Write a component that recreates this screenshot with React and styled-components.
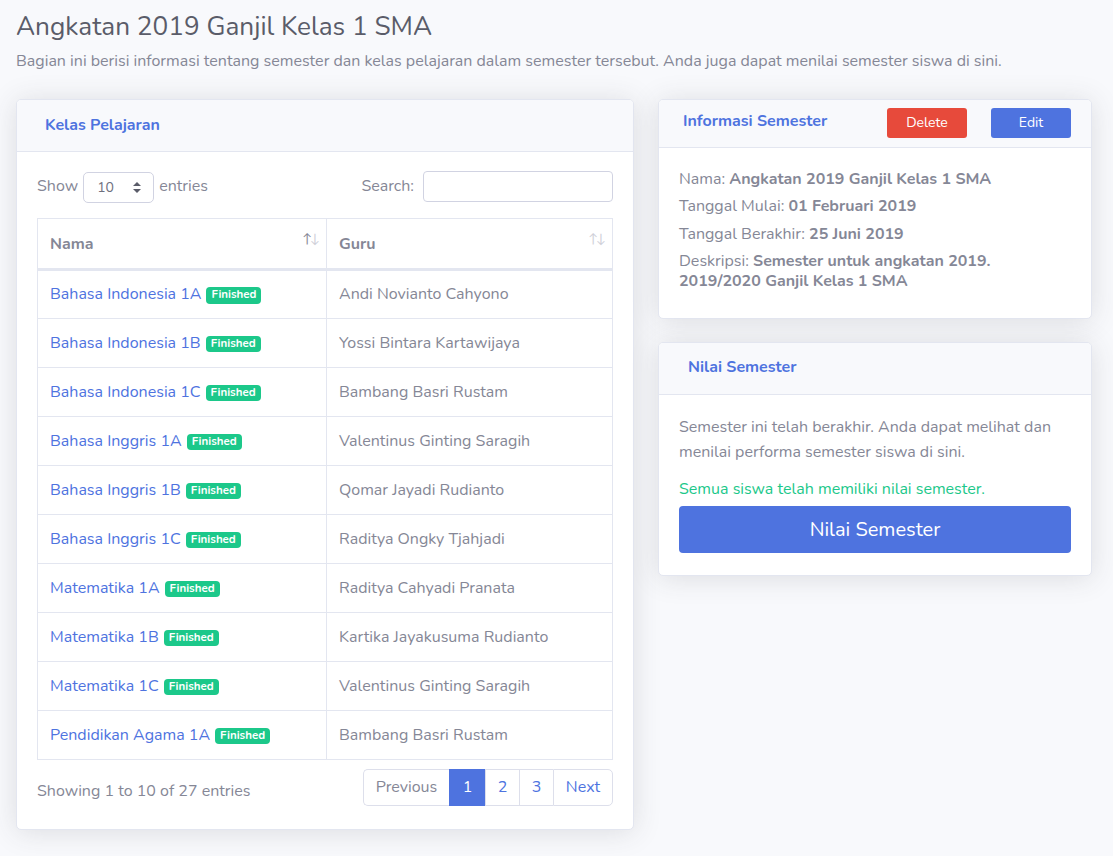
import React from "react";
import styled, { createGlobalStyle } from "styled-components";

const FONT = `Nunito, "Noto Sans", "Open Sans", Lato, sans-serif`;

const Global = createGlobalStyle`
  html, body { margin: 0; padding: 0; background: #f8f9fc; }
  body { font-family: ${FONT}; color: #858796; font-size: 16px; }
  * { box-sizing: border-box; }
`;

const Page = styled.div`
  padding: 11px 21px 24px 16px;
  min-height: 856px;
`;

const Title = styled.h1`
  margin: 0;
  font-size: 26.2px;
  font-weight: 400;
  color: #5a5c69;
  line-height: 1.2;
`;

const Lead = styled.p`
  margin: 10px 0 27px;
  font-size: 16px;
  line-height: 1.2;
  color: #858796;
`;

const Grid = styled.div`
  display: grid;
  grid-template-columns: 618px 434px;
  column-gap: 24px;
  align-items: start;
`;

const Column = styled.div`
  display: flex;
  flex-direction: column;
  gap: 23px;
`;

const Card = styled.div`
  background: #fff;
  border: 1px solid #e3e6f0;
  border-radius: 5px;
  box-shadow: 0 2px 28px 0 rgba(58, 59, 69, 0.15);
  overflow: hidden;
`;

const CardHeader = styled.div`
  background: #f8f9fc;
  border-bottom: 1px solid #e3e6f0;
  height: ${(p) => p.$h}px;
  padding: 0 20px 0 ${(p) => p.$pl}px;
  display: flex;
  align-items: center;
  justify-content: space-between;
`;

const CardTitle = styled.h6`
  margin: 0;
  font-size: 16px;
  font-weight: 700;
  color: #4e73df;
  margin-top: ${(p) => p.$mt || 0}px;
`;

const HeaderButtons = styled.div`
  display: flex;
  gap: 24px;
  align-self: flex-start;
  margin-top: 8px;
`;

const SmallBtn = styled.button`
  width: 80px;
  height: 30px;
  border: none;
  border-radius: 3px;
  font-family: ${FONT};
  font-size: 14px;
  color: #fff;
  background: ${(p) => (p.$variant === "danger" ? "#e74a3b" : "#4e73df")};
`;

const CardBody = styled.div`
  padding: ${(p) => p.$pad};
`;

const Controls = styled.div`
  display: flex;
  justify-content: space-between;
  align-items: center;
  font-size: 16px;
  margin-bottom: 15px;
`;

const Inline = styled.label`
  display: flex;
  align-items: center;
  gap: 5px;
`;

const SelectBox = styled.div`
  width: 71px;
  height: 31px;
  border: 1px solid #d1d3e2;
  border-radius: 5px;
  display: flex;
  align-items: center;
  justify-content: space-between;
  padding: 0 12px 0 13px;
  color: #6e707e;
  font-size: 14px;
  margin-top: 2px;
`;

const SearchInput = styled.input`
  width: 190px;
  height: 31px;
  border: 1px solid #d1d3e2;
  border-radius: 4px;
  margin-left: 4px;
  outline: none;
`;

const Table = styled.table`
  width: 100%;
  border-collapse: collapse;
  border: 1px solid #e3e6f0;
  font-size: 16px;
`;

const Th = styled.th`
  position: relative;
  text-align: left;
  font-weight: 700;
  font-size: 16px;
  color: #858796;
  height: 51px;
  padding: 2px 12px 0;
  border-right: 1px solid #e3e6f0;
  border-bottom: 3px solid #e3e6f0;
`;

const SortIcon = styled.span`
  position: absolute;
  right: 8px;
  top: 11px;
  font-size: 13px;
  font-weight: 400;
  letter-spacing: -2px;
  color: #cfd0d8;
  & b { font-weight: 400; color: ${(p) => (p.$active ? "#858796" : "#cfd0d8")}; }
`;

const Td = styled.td`
  height: 49px;
  padding: 0 12px;
  border-right: 1px solid #e3e6f0;
  border-bottom: 1px solid #e3e6f0;
  color: #858796;
`;

const Link = styled.a`
  color: #4e73df;
  text-decoration: none;
`;

const Badge = styled.span`
  display: inline-block;
  background: #1cc88a;
  color: #fff;
  font-size: 11.5px;
  font-weight: 700;
  padding: 2px 5px 3px;
  border-radius: 4px;
  margin-left: 5px;
  vertical-align: 1px;
  line-height: 1;
`;

const Footer = styled.div`
  display: flex;
  justify-content: space-between;
  align-items: center;
  margin-top: 9px;
`;

const Info = styled.div`
  font-size: 16px;
  padding-top: 8px;
`;

const Pager = styled.div`
  display: flex;
  height: 37px;
`;

const PageItem = styled.span`
  display: flex;
  align-items: center;
  justify-content: center;
  width: ${(p) => p.$w}px;
  font-size: 16px;
  color: ${(p) => (p.$active ? "#fff" : p.$muted ? "#858796" : "#4e73df")};
  background: ${(p) => (p.$active ? "#4e73df" : "#fff")};
  border: 1px solid ${(p) => (p.$active ? "#4e73df" : "#dddfeb")};
  border-right: none;
  &:first-child { border-radius: 5px 0 0 5px; }
  &:last-child { border-right: 1px solid #dddfeb; border-radius: 0 5px 5px 0; }
`;

const InfoLine = styled.p`
  margin: 0 0 7.5px;
  font-size: 16px;
  line-height: 20px;
  & b { font-weight: 700; }
`;

const Para = styled.p`
  margin: 0 0 12px;
  font-size: 16px;
  line-height: 25px;
  color: ${(p) => (p.$success ? "#1cc88a" : "#858796")};
`;

const BigButton = styled.button`
  width: 100%;
  height: 47px;
  border: none;
  border-radius: 4px;
  background: #4e73df;
  color: #fff;
  font-family: ${FONT};
  font-size: 20px;
  margin-top: -8px;
  display: block;
`;

const rows = [
  ["Bahasa Indonesia 1A", "Andi Novianto Cahyono"],
  ["Bahasa Indonesia 1B", "Yossi Bintara Kartawijaya"],
  ["Bahasa Indonesia 1C", "Bambang Basri Rustam"],
  ["Bahasa Inggris 1A", "Valentinus Ginting Saragih"],
  ["Bahasa Inggris 1B", "Qomar Jayadi Rudianto"],
  ["Bahasa Inggris 1C", "Raditya Ongky Tjahjadi"],
  ["Matematika 1A", "Raditya Cahyadi Pranata"],
  ["Matematika 1B", "Kartika Jayakusuma Rudianto"],
  ["Matematika 1C", "Valentinus Ginting Saragih"],
  ["Pendidikan Agama 1A", "Bambang Basri Rustam"],
];

const Caret = () => (
  <svg width="8" height="11" viewBox="0 0 8 11">
    <path d="M4 0 L8 4 H0 Z" fill="#5a5c69" />
    <path d="M4 11 L8 7 H0 Z" fill="#5a5c69" />
  </svg>
);

export default function App() {
  return (
    <>
      <Global />
      <Page>
        <Title>Angkatan 2019 Ganjil Kelas 1 SMA</Title>
        <Lead>
          Bagian ini berisi informasi tentang semester dan kelas pelajaran dalam semester tersebut. Anda juga dapat menilai semester siswa di sini.
        </Lead>
        <Grid>
          <Card>
            <CardHeader $h={52} $pl={28}>
              <CardTitle>Kelas Pelajaran</CardTitle>
            </CardHeader>
            <CardBody $pad="18px 20px 23px 20px">
              <Controls>
                <Inline>
                  Show
                  <SelectBox>
                    10 <Caret />
                  </SelectBox>
                  entries
                </Inline>
                <Inline>
                  Search:
                  <SearchInput />
                </Inline>
              </Controls>
              <Table>
                <thead>
                  <tr>
                    <Th style={{ width: 289 }}>
                      Nama
                      <SortIcon $active>
                        <b>↑</b>↓
                      </SortIcon>
                    </Th>
                    <Th>
                      Guru
                      <SortIcon>↑↓</SortIcon>
                    </Th>
                  </tr>
                </thead>
                <tbody>
                  {rows.map(([n, g]) => (
                    <tr key={n}>
                      <Td>
                        <Link href="#">{n}</Link>
                        <Badge>Finished</Badge>
                      </Td>
                      <Td>{g}</Td>
                    </tr>
                  ))}
                </tbody>
              </Table>
              <Footer>
                <Info>Showing 1 to 10 of 27 entries</Info>
                <Pager>
                  <PageItem $w={86} $muted>Previous</PageItem>
                  <PageItem $w={36} $active>1</PageItem>
                  <PageItem $w={34}>2</PageItem>
                  <PageItem $w={34}>3</PageItem>
                  <PageItem $w={60}>Next</PageItem>
                </Pager>
              </Footer>
            </CardBody>
          </Card>
          <Column>
            <Card>
              <CardHeader $h={48} $pl={24}>
                <CardTitle $mt={-4}>Informasi Semester</CardTitle>
                <HeaderButtons>
                  <SmallBtn $variant="danger">Delete</SmallBtn>
                  <SmallBtn>Edit</SmallBtn>
                </HeaderButtons>
              </CardHeader>
              <CardBody $pad="21px 20px 19px 20px">
                <InfoLine>
                  Nama: <b>Angkatan 2019 Ganjil Kelas 1 SMA</b>
                </InfoLine>
                <InfoLine>
                  Tanggal Mulai: <b>01 Februari 2019</b>
                </InfoLine>
                <InfoLine>
                  Tanggal Berakhir: <b>25 Juni 2019</b>
                </InfoLine>
                <InfoLine>
                  Deskripsi: <b>Semester untuk angkatan 2019.<br />2019/2020 Ganjil Kelas 1 SMA</b>
                </InfoLine>
              </CardBody>
            </Card>
            <Card>
              <CardHeader $h={52} $pl={29}>
                <CardTitle $mt={-2}>Nilai Semester</CardTitle>
              </CardHeader>
              <CardBody $pad="20px 20px 22px 20px">
                <Para>
                  Semester ini telah berakhir. Anda dapat melihat dan menilai performa semester siswa di sini.
                </Para>
                <Para $success>Semua siswa telah memiliki nilai semester.</Para>
                <BigButton>Nilai Semester</BigButton>
              </CardBody>
            </Card>
          </Column>
        </Grid>
      </Page>
    </>
  );
}
